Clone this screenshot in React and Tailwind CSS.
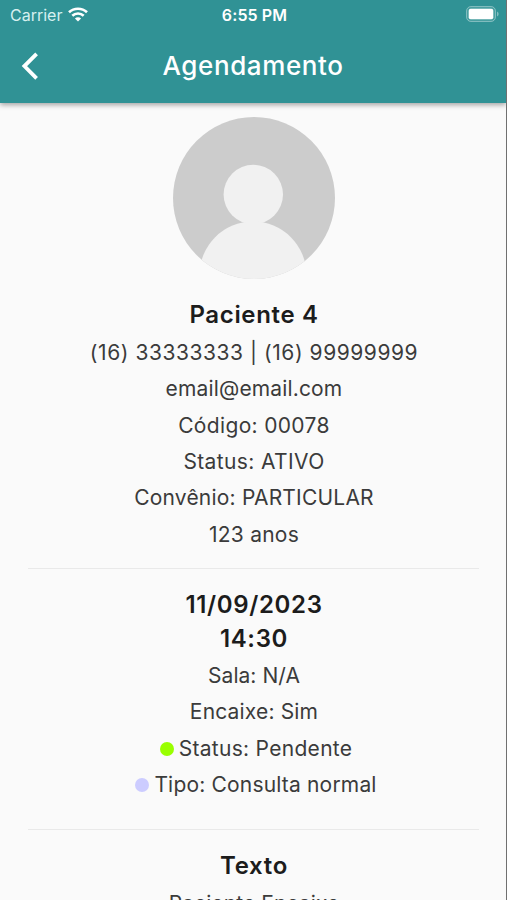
import React from 'react';

const patient = {
    name: 'Paciente 4',
    details: [
        { text: '(16) 33333333 | (16) 99999999', className: 'tracking-[0.55px]' },
        { text: 'email@email.com', className: 'tracking-[0.15px]' },
        { text: 'Código: 00078', className: 'tracking-[0.34px]' },
        { text: 'Status: ATIVO', className: 'tracking-[0.38px]' },
        { text: 'Convênio: PARTICULAR', className: 'tracking-[0.2px]' },
        { text: '123 anos', className: 'tracking-[0.24px]' },
    ],
};

const appointment = [
    { text: 'Sala: N/A', className: 'tracking-[0.05px]' },
    { text: 'Encaixe: Sim', className: 'tracking-[0.17px]' },
    { text: 'Status: Pendente', dot: 'bg-[#99ff00]', className: 'tracking-[0.3px]' },
    { text: 'Tipo: Consulta normal', dot: 'bg-[#ccccff]', className: 'tracking-[0.18px]' },
];

function StatusBar() {
    return (
        <div className="grid h-[30px] grid-cols-3 items-center pr-[7px] pl-[10px] text-white">
            <div className="flex items-center gap-[6px]">
                <span className="text-[16px] leading-[30px] text-[#d6f0f0]">Carrier</span>
                <svg className="mb-px h-[15px] w-[20px]" viewBox="0 0 20 15" fill="none" stroke="currentColor" strokeWidth="2.6">
                    <path d="M1 5.3a13 13 0 0 1 18 0" />
                    <path d="M4.3 8.8a8.2 8.2 0 0 1 11.4 0" />
                    <path d="M10 14.6 6.9 11.5a4.4 4.4 0 0 1 6.2 0Z" fill="currentColor" stroke="none" />
                </svg>
            </div>
            <span className="text-center text-[16px] leading-[30px] font-semibold tracking-[0.1px]">6:55 PM</span>
            <svg className="mb-[2px] h-[17px] w-[33px] justify-self-end" viewBox="0 0 33 17">
                <rect x="0.5" y="0.5" width="29" height="15" rx="4.5" fill="#fff" fillOpacity="0.12" stroke="#fff" strokeOpacity="0.35" />
                <rect x="2.7" y="2.7" width="24.6" height="10.6" rx="2" fill="#fff" />
                <path d="M31 5.5v5a2.7 2.7 0 0 0 0-5Z" fill="#fff" fillOpacity="0.4" />
            </svg>
        </div>
    );
}

function Header() {
    return (
        <header className="relative z-10 h-[103px] bg-[#309295] shadow-[0_2px_5px_rgba(0,0,0,0.35)]">
            <StatusBar />
            <div className="grid h-[71px] grid-cols-[60px_1fr_60px] items-center text-white">
                <svg className="ml-[21px] h-[28px] w-[18px]" viewBox="0 0 18 28" fill="none" stroke="currentColor" strokeWidth="3.8">
                    <path d="M15.6 1.9 3.4 14.1l12.2 12.2" />
                </svg>
                <h1 className="text-center text-[26px] font-medium tracking-[0.6px]">Agendamento</h1>
            </div>
        </header>
    );
}

function Avatar() {
    return (
        <svg className="mx-auto h-[162px] w-[162px]" viewBox="0 0 162 162">
            <defs>
                <clipPath id="avatar">
                    <circle cx="81" cy="81" r="81" />
                </clipPath>
            </defs>
            <g clipPath="url(#avatar)">
                <rect width="162" height="162" fill="#cccccc" />
                <circle cx="80.3" cy="77.5" r="29.7" fill="#f1f1f1" />
                <circle cx="80" cy="158" r="53.5" fill="#f1f1f1" />
            </g>
        </svg>
    );
}

function Row({ text, dot, className }) {
    return (
        <div className={`flex h-[36.3px] items-center justify-center gap-[5px] ${dot ? 'pl-[5px]' : 'pl-px'}`}>
            {dot && <span className={`h-[14px] w-[14px] rounded-full ${dot}`} />}
            <p className={`text-[21px] leading-[36px] whitespace-nowrap text-[#3b3b3b] ${className}`}>{text}</p>
        </div>
    );
}

function Title({ children }) {
    return <h2 className="pl-px text-center text-[24px] leading-[34px] font-semibold tracking-[0.65px] text-[#1c1c1c]">{children}</h2>;
}

export default function App() {
    return (
        <div className="h-[900px] overflow-hidden border-r border-[#707070] bg-[#fafafa] font-['Inter',sans-serif]">
            <Header />
            <main className="pr-[27px] pl-[28px] pt-[14px]">
                <Avatar />
                <section className="h-[289px] pt-[19px]">
                    <Title>{patient.name}</Title>
                    <div className="pt-[3px]">
                        {patient.details.map((row) => <Row key={row.text} {...row} />)}
                    </div>
                </section>
                <section className="h-[261px] border-t border-[#e9e9e9] pt-[19px]">
                    <Title>11/09/2023</Title>
                    <Title>14:30</Title>
                    <div className="pt-[2px]">
                        {appointment.map((row) => <Row key={row.text} {...row} />)}
                    </div>
                </section>
                <section className="border-t border-[#e9e9e9] pt-[19px]">
                    <Title>Texto</Title>
                    <div className="pt-[3px]">
                        <Row text="Paciente Encaixe" className="tracking-[0.1px]" />
                    </div>
                </section>
            </main>
        </div>
    );
}
